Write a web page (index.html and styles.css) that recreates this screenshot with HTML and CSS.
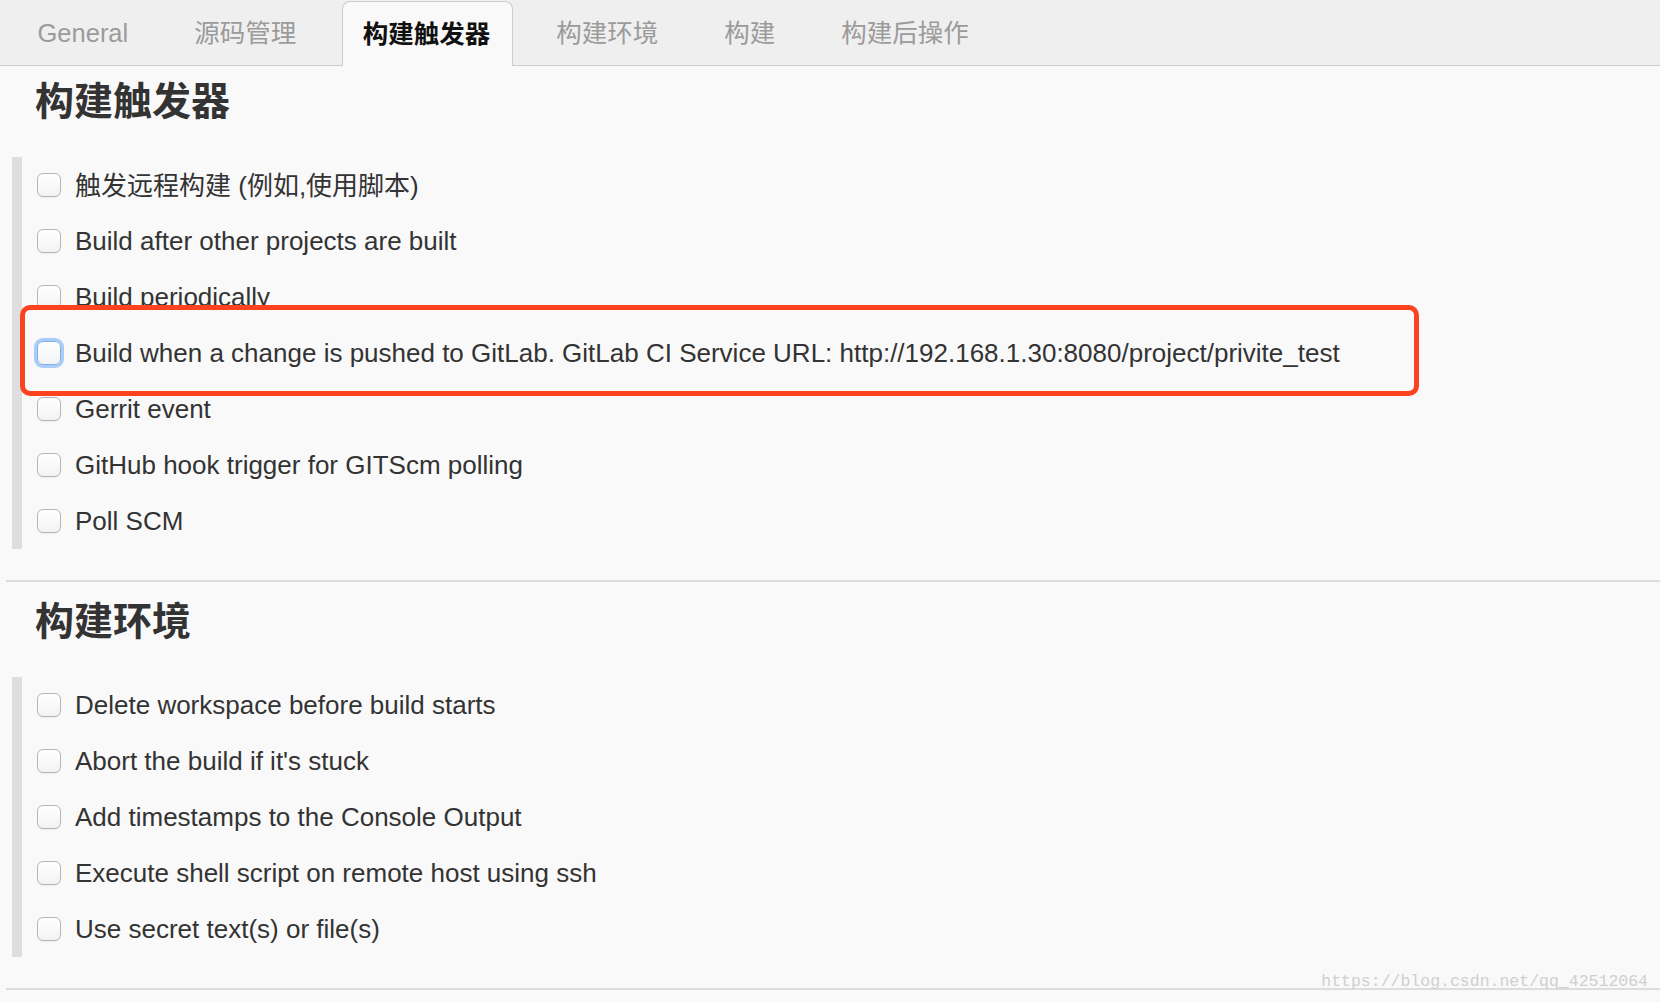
FILE: index.html
```html
<!DOCTYPE html>
<html lang="zh-CN">
<head>
    <meta charset="UTF-8">
    <meta name="viewport" content="width=device-width, initial-scale=1.0">
    <title>构建触发器</title>
    <link rel="stylesheet" href="styles.css">
</head>
<body>
    <div class="tabs">
        <div class="tab">General</div>
        <div class="tab">源码管理</div>
        <div class="tab active">构建触发器</div>
        <div class="tab">构建环境</div>
        <div class="tab">构建</div>
        <div class="tab">构建后操作</div>
    </div>

    <div class="content">
        <div class="section">
            <h2>构建触发器</h2>
            <div class="options">
                <label class="option"><input type="checkbox"><span class="cjk">触发远程构建 (例如,使用脚本)</span></label>
                <label class="option"><input type="checkbox"><span>Build after other projects are built</span></label>
                <label class="option"><input type="checkbox"><span>Build periodically</span></label>
                <label class="option marked">
                    <span class="mark"></span>
                    <input type="checkbox" class="focused"><span>Build when a change is pushed to GitLab. GitLab CI Service URL: http://192.168.1.30:8080/project/privite_test</span>
                </label>
                <label class="option"><input type="checkbox"><span>Gerrit event</span></label>
                <label class="option"><input type="checkbox"><span>GitHub hook trigger for GITScm polling</span></label>
                <label class="option"><input type="checkbox"><span>Poll SCM</span></label>
            </div>
        </div>

        <div class="section">
            <h2>构建环境</h2>
            <div class="options">
                <label class="option"><input type="checkbox"><span>Delete workspace before build starts</span></label>
                <label class="option"><input type="checkbox"><span>Abort the build if it's stuck</span></label>
                <label class="option"><input type="checkbox"><span>Add timestamps to the Console Output</span></label>
                <label class="option"><input type="checkbox"><span>Execute shell script on remote host using ssh</span></label>
                <label class="option"><input type="checkbox"><span>Use secret text(s) or file(s)</span></label>
            </div>
        </div>
    </div>

    <div class="watermark">https://blog.csdn.net/qq_42512064</div>
</body>
</html>
```

FILE: styles.css
```css
body {
    margin: 0;
    padding: 0;
    background-color: #f9f9f9;
    font-family: "Liberation Sans", "Noto Sans CJK SC", Arial, sans-serif;
    color: #333333;
    position: relative;
    min-height: 1002px;
    overflow: hidden;
}
.tabs {
    display: flex;
    height: 65px;
    background: #efefef;
    border-bottom: 1px solid #cccccc;
    padding-left: 4.5px;
}
.tab {
    padding: 0 33px;
    line-height: 66px;
    font-size: 25.5px;
    color: #9b9b9b;
    white-space: nowrap;
}
.tab.active {
    margin: 1px 10px -1px 12.5px;
    padding: 0 22px 0 20px;
    line-height: 64px;
    color: #111111;
    font-weight: bold;
    background: #f9f9f9;
    border: 1px solid #cccccc;
    border-bottom: none;
    border-radius: 8px 8px 0 0;
}
.content {
    padding-left: 6px;
}
.section {
    padding-top: 14px;
    padding-bottom: 31px;
    border-bottom: 2px solid #dddddd;
}
.section:first-child {
    padding-top: 10px;
}
.section h2 {
    margin: 0 0 37px 29px;
    font-size: 39px;
    line-height: 44px;
    font-weight: bold;
    color: #333333;
    font-family: "Noto Sans CJK SC", sans-serif;
}
.options {
    margin-left: 6px;
    border-left: 10px solid #dedede;
}
.option {
    display: flex;
    align-items: center;
    height: 56px;
    font-size: 26px;
    white-space: nowrap;
}
.option .cjk {
    margin-top: -4px;
}
.option input {
    -webkit-appearance: none;
    appearance: none;
    width: 24px;
    height: 24px;
    margin: 0 14px 0 15px;
    border: 1px solid #b6b6b6;
    border-radius: 6px;
    background: linear-gradient(#ffffff, #f3f3f3);
    box-shadow: 0 1px 1px rgba(0, 0, 0, 0.05);
    flex-shrink: 0;
}
.option input.focused {
    border-color: #7fb0ea;
    box-shadow: 0 0 0 3px #a8cdf6;
}
.marked {
    position: relative;
    z-index: 1;
}
.mark {
    position: absolute;
    left: -2px;
    top: -20px;
    width: 1399px;
    height: 91px;
    box-sizing: border-box;
    border: 5px solid #fc4320;
    border-radius: 10px;
    background: #f9f9f9;
    z-index: -1;
}
.watermark {
    position: absolute;
    right: 12px;
    top: 972px;
    font-family: "Liberation Mono", "DejaVu Sans Mono", monospace;
    font-size: 16.5px;
    color: #cfcfcf;
}
```
